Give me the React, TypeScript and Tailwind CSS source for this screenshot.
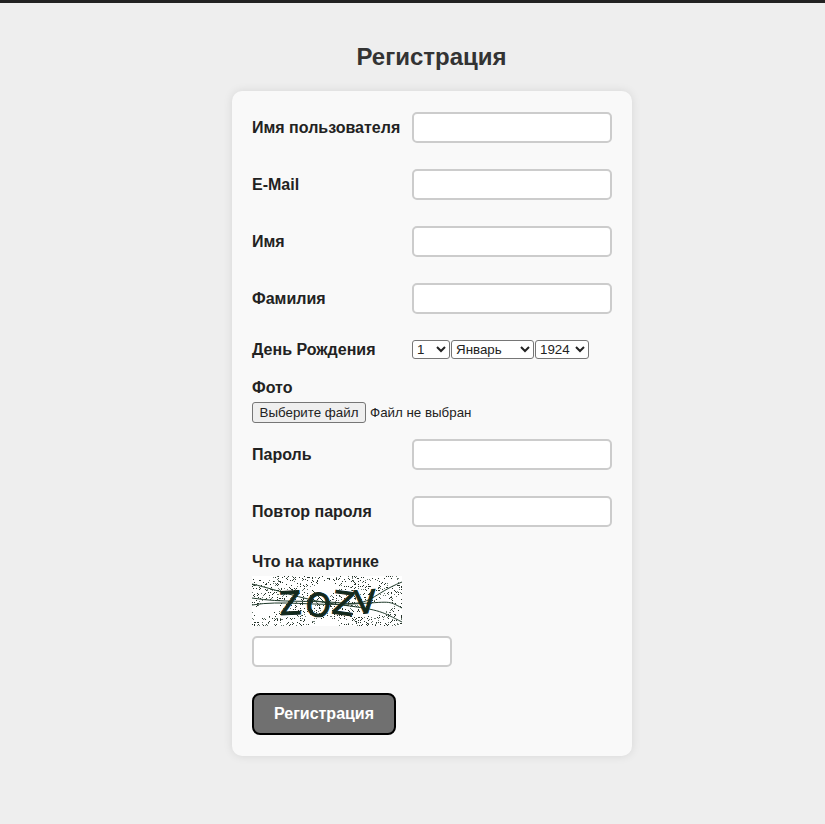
const days = ["1", "2", "3"];
const months = ["Январь", "Февраль", "Март"];
const years = ["1924", "1925", "1926"];

// fixed noise for the captcha picture
const noise: { x: number; y: number }[] = [];
let seed = 7;
for (let i = 0; i < 1100; i++) {
  seed = (seed * 1103515245 + 12345) % 2147483648;
  const x = (seed >> 8) % 150;
  seed = (seed * 1103515245 + 12345) % 2147483648;
  const y = (seed >> 8) % 50;
  // leave pale patches, the dots clump in the picture
  if (Math.sin(x / 9) + Math.cos(y / 6 + x / 17) > 1.2) continue;
  noise.push({ x, y });
}

const captchaLetters = [
  { ch: "Z", x: 28, y: 39, r: -3 },
  { ch: "O", x: 52, y: 38, r: 10 },
  { ch: "Z", x: 79, y: 37, r: 8 },
  { ch: "V", x: 103, y: 38, r: -4 },
];

function Captcha() {
  return (
    <svg width="150" height="50" viewBox="0 0 150 50" className="block bg-white">
      {noise.map((p, i) => (
        <rect key={i} x={p.x} y={p.y} width="1" height="1" fill={i % 3 === 0 ? "#6b7a70" : "#26332b"} />
      ))}
      <g stroke="#1f3a2a" fill="none" strokeWidth="1">
        <path d="M0 8 C30 15 50 24 90 29 S130 36 150 46" />
        <path d="M0 22 C30 27 60 24 90 27 S120 18 150 6" />
        <path d="M0 29 C30 24 60 30 100 28 S135 24 150 32" />
        <path d="M60 14 L76 30" />
      </g>
      {captchaLetters.map((l, i) => (
        <text
          key={i}
          x={l.x}
          y={l.y}
          transform={`rotate(${l.r} ${l.x} ${l.y})`}
          fontFamily="'DejaVu Sans', sans-serif"
          fontSize="32"
          fill="#13291c"
          stroke="#13291c"
          strokeWidth="1"
        >
          {l.ch}
        </text>
      ))}
    </svg>
  );
}

function Field({ label }: { label: string }) {
  return (
    <div className="flex items-center mb-[26px]">
      <label className="w-[160px] font-bold text-base text-[#222]">{label}</label>
      <input
        type="text"
        className="w-[200px] h-[31px] bg-white border-2 border-[#ccc] rounded-[5px] outline-none"
      />
    </div>
  );
}

function Select({ options, className }: { options: string[]; className: string }) {
  return (
    <select
      className={`appearance-auto h-[19px] bg-white border border-[#767676] rounded-[3px] text-[13.33px] text-[#222] ${className}`}
    >
      {options.map((o) => (
        <option key={o}>{o}</option>
      ))}
    </select>
  );
}

export default function App() {
  return (
    <div className="min-h-[824px] bg-[#eee] border-t-[3px] border-[#222] font-['Liberation_Sans',Arial,sans-serif] text-[#222]">
      <h1 className="pt-[40px] pl-[38px] text-center text-2xl leading-[28px] font-bold text-[#333]">Регистрация</h1>
      <div className="w-[400px] h-[665px] ml-[232px] mt-[20px] px-5 pt-[21px] bg-[#f9f9f9] rounded-[10px] shadow-[0_0_10px_rgba(0,0,0,0.1)]">
        <Field label="Имя пользователя" />
        <Field label="E-Mail" />
        <Field label="Имя" />
        <Field label="Фамилия" />
        <div className="flex items-center mt-[-2px]">
          <label className="w-[160px] font-bold text-base">День Рождения</label>
          <div className="flex gap-px mb-[2px]">
            <Select options={days} className="w-[38px]" />
            <Select options={months} className="w-[83px]" />
            <Select options={years} className="w-[54px]" />
          </div>
        </div>
        <div className="mt-[17px] font-bold text-base leading-[18px]">Фото</div>
        <div className="flex items-center mt-[5px] mb-[16px] text-[13.33px] text-[#222]">
          <button className="h-[21px] w-[114px] bg-[#efefef] border border-[#767676] rounded-[3px]">Выберите файл</button>
          <span className="ml-[4px]">Файл не выбран</span>
        </div>
        <Field label="Пароль" />
        <Field label="Повтор пароля" />
        <div className="font-bold text-base leading-[18px]">Что на картинке</div>
        <div className="mt-[5px]">
          <Captcha />
        </div>
        <input
          type="text"
          className="block w-[200px] h-[31px] mt-[10px] bg-white border-2 border-[#ccc] rounded-[5px] outline-none"
        />
        <button className="block w-[144px] h-[42px] mt-[26px] bg-[#707070] border-2 border-black rounded-[8px] text-white text-base font-bold">
          Регистрация
        </button>
      </div>
    </div>
  );
}
